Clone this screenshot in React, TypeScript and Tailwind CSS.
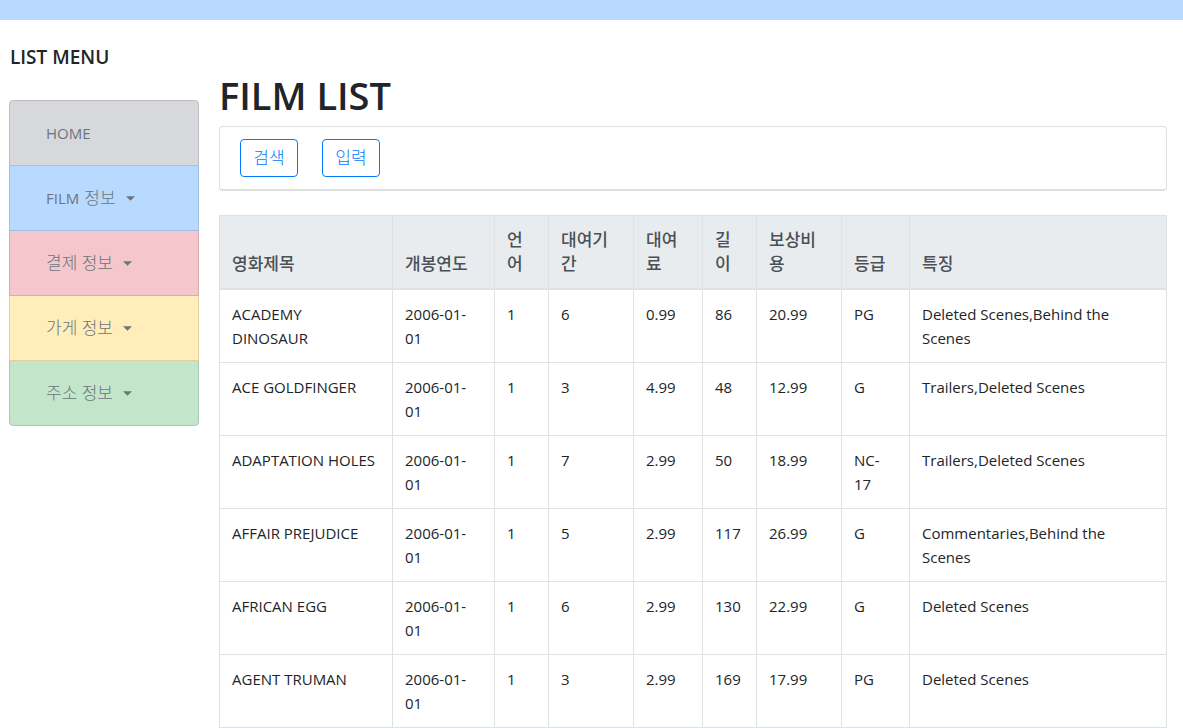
type MenuItem = { latin?: string; korean?: string; color: string };

const menu: MenuItem[] = [
  { latin: 'HOME', color: 'bg-[#d6d8db]' },
  { latin: 'FILM', korean: '정보', color: 'bg-[#b8daff]' },
  { korean: '결제 정보', color: 'bg-[#f5c6cb]' },
  { korean: '가게 정보', color: 'bg-[#ffeeba]' },
  { korean: '주소 정보', color: 'bg-[#c3e6cb]' },
];

const columns = [
  { label: '영화제목', width: 'w-[173px]' },
  { label: '개봉연도', width: 'w-[102px]' },
  { label: '언어', width: 'w-[54px]' },
  { label: '대여기간', width: 'w-[85px]' },
  { label: '대여료', width: 'w-[69px]' },
  { label: '길이', width: 'w-[54px]' },
  { label: '보상비용', width: 'w-[85px]' },
  { label: '등급', width: 'w-[68px]' },
  { label: '특징', width: '' },
];

const films = [
  ['ACADEMY DINOSAUR', '2006-01-01', '1', '6', '0.99', '86', '20.99', 'PG', 'Deleted Scenes,Behind the Scenes'],
  ['ACE GOLDFINGER', '2006-01-01', '1', '3', '4.99', '48', '12.99', 'G', 'Trailers,Deleted Scenes'],
  ['ADAPTATION HOLES', '2006-01-01', '1', '7', '2.99', '50', '18.99', 'NC-17', 'Trailers,Deleted Scenes'],
  ['AFFAIR PREJUDICE', '2006-01-01', '1', '5', '2.99', '117', '26.99', 'G', 'Commentaries,Behind the Scenes'],
  ['AFRICAN EGG', '2006-01-01', '1', '6', '2.99', '130', '22.99', 'G', 'Deleted Scenes'],
  ['AGENT TRUMAN', '2006-01-01', '1', '3', '2.99', '169', '17.99', 'PG', 'Deleted Scenes'],
];

function Sidebar() {
  return (
    <aside className="w-[190px] shrink-0 pt-[25px]">
      <h2 className="px-px text-[19px] leading-6 font-semibold">LIST MENU</h2>
      <nav className="mt-[31px]">
        <ul className="overflow-hidden rounded">
          {menu.map((item, i) => (
            <li
              key={i}
              className={`border-x border-b border-black/[.125] px-5 py-3 first:rounded-t first:border-t last:rounded-b ${item.color}`}
            >
              <a href="#" className="flex items-center px-4 py-2 leading-6 text-[#6c757d]">
                {item.latin && <span className="text-[15px]">{item.latin}</span>}
                {item.korean && (
                  <>
                    <span className={item.latin ? 'ml-[5px] text-[17px] font-light' : 'text-[17px] font-light'}>
                      {item.korean}
                    </span>
                    <svg className="ml-2.5 h-[5px] w-[9px]" viewBox="0 0 10 5" fill="currentColor" aria-hidden="true">
                      <path d="M0 0h10L5 5z" />
                    </svg>
                  </>
                )}
              </a>
            </li>
          ))}
        </ul>
      </nav>
    </aside>
  );
}

export default function App() {
  return (
    <div className="bg-white font-['Open_Sans','Noto_Sans_CJK_KR',sans-serif] text-[#212529]">
      <header className="h-5 bg-[#b8daff]" />
      <div className="flex gap-5 pr-4 pl-[9px]">
        <Sidebar />
        <main className="min-w-0 flex-1 pt-[51px]">
          <h1 className="text-[38px] leading-[48px] font-semibold">FILM LIST</h1>
          <div className="mt-[7px] flex gap-6 rounded border border-b-2 border-[#dfdfdf] px-5 py-3">
            {['검색', '입력'].map((label) => (
              <button
                key={label}
                type="button"
                className="h-[38px] w-[58px] rounded border border-[#007bff] text-[17px] leading-6 font-light text-[#007bff]"
              >
                {label}
              </button>
            ))}
          </div>
          <table className="mt-6 w-full table-fixed border-collapse border border-[#dee2e6]">
            <thead>
              <tr>
                {columns.map((c) => (
                  <th
                    key={c.label}
                    scope="col"
                    className={`border border-b-2 border-[#dee2e6] bg-[#e9ecef] py-3 pr-4 pl-3 text-left align-bottom text-[17px] leading-6 font-medium text-[#495057] ${c.width}`}
                  >
                    {c.label}
                  </th>
                ))}
              </tr>
            </thead>
            <tbody>
              {films.map((row) => (
                <tr key={row[0]}>
                  {row.map((cell, i) => (
                    <td key={i} className="border border-[#dee2e6] py-3 pr-4 pl-3 align-top text-[15px] leading-6">
                      {cell}
                    </td>
                  ))}
                </tr>
              ))}
            </tbody>
          </table>
        </main>
      </div>
    </div>
  );
}
